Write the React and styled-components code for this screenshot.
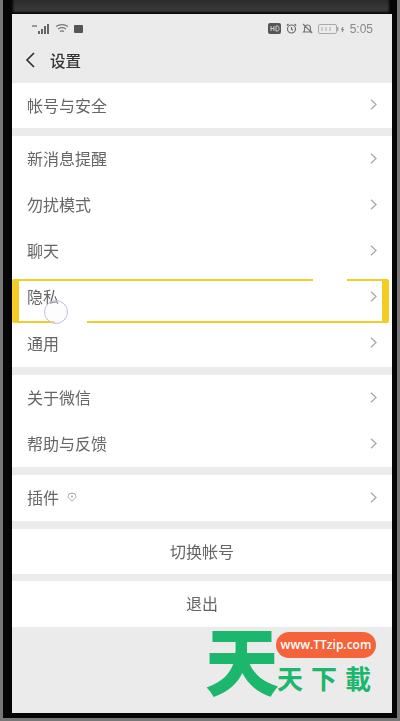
import React from 'react';
import styled, { createGlobalStyle } from 'styled-components';

const GlobalStyle = createGlobalStyle`
  html, body {
    margin: 0;
    padding: 0;
    background: #e8e8e8;
  }
`;

const Phone = styled.div`
  position: relative;
  box-sizing: border-box;
  width: 400px;
  height: 721px;
  padding: 14px 5px 5px 9px;
  border: solid #777;
  border-width: 0 3px 3px 3px;
  background: #050505;
  overflow: hidden;
  font-family: "Noto Sans CJK SC", "Liberation Sans", sans-serif;

  &::before {
    content: '';
    position: absolute;
    left: 10px;
    right: 8px;
    top: -2px;
    height: 14px;
    background: linear-gradient(#282828, #3c3c3c);
    filter: blur(1px);
  }
`;

const Screen = styled.div`
  display: flex;
  flex-direction: column;
  height: 100%;
  background: #ebebeb;
  filter: blur(0.6px);
`;

const StatusBar = styled.div`
  display: flex;
  align-items: center;
  justify-content: space-between;
  height: 29px;
  padding: 0 19px 0 20px;
  color: #666;
`;

const StatusGroup = styled.div`
  display: flex;
  align-items: center;
  gap: 5px;
`;

const Clock = styled.span`
  font-family: "Liberation Sans", sans-serif;
  font-size: 12px;
  color: #888;
`;

const NavBar = styled.div`
  display: flex;
  align-items: center;
  gap: 15px;
  height: 39px;
  padding: 0 0 6px 13px;
  box-sizing: border-box;
  font-size: 15.5px;
  font-weight: 500;
  color: #333;
`;

const Group = styled.div`
  display: flex;
  flex-direction: column;
  background: #fff;
  margin-top: ${(p) => p.$gap ?? 8}px;
`;

const Row = styled.div`
  position: relative;
  display: flex;
  align-items: center;
  justify-content: ${(p) => (p.$center ? 'center' : 'space-between')};
  box-sizing: border-box;
  height: ${(p) => p.$height ?? 46}px;
  padding: 0 15px 2px 15px;
  font-size: 16px;
  color: #666;
`;

const Label = styled.span`
  display: flex;
  align-items: center;
  gap: 8px;
`;

const Highlight = styled.div`
  position: absolute;
  left: 0;
  right: 3px;
  top: 5px;
  bottom: -3px;
  border: solid #f6cb24;
  border-width: 2px 7px 2px 7px;
  border-radius: 2px;
`;

const LineGap = styled.div`
  position: absolute;
  width: ${(p) => p.$width}px;
  height: 3px;
  background: #fff;
  left: ${(p) => p.$left}px;
  ${(p) => (p.$bottom ? 'bottom: -3px;' : 'top: 4px;')}
`;

const TouchRing = styled.div`
  position: absolute;
  left: 32px;
  top: 26px;
  width: 22px;
  height: 22px;
  border: 1px solid #c4c0da;
  border-radius: 50%;
  background: rgba(248, 248, 250, 0.35);
`;

const Watermark = styled.div`
  position: absolute;
  left: 202px;
  top: 621px;
  width: 176px;
  height: 74px;
`;

const BigGlyph = styled.span`
  position: absolute;
  left: 0;
  top: 0;
  font-size: 74px;
  line-height: 74px;
  font-weight: 900;
  color: #1cb66d;
`;

const Pill = styled.span`
  position: absolute;
  left: 71px;
  top: 11px;
  width: 100px;
  height: 26px;
  border-radius: 13px;
  background: #f4633a;
  color: #fff;
  font-family: "Open Sans", "Liberation Sans", sans-serif;
  font-size: 12px;
  font-weight: 600;
  line-height: 26px;
  text-align: center;
`;

const BrandText = styled.span`
  position: absolute;
  left: 72px;
  top: 44px;
  font-size: 26px;
  line-height: 26px;
  letter-spacing: 8px;
  font-weight: 700;
  color: #1cb66d;
  white-space: nowrap;
`;

const Chevron = () => (
  <svg width="7" height="11" viewBox="0 0 7 11" fill="none" stroke="#a9a9a9" strokeWidth="1.3">
    <path d="M1 .8l5 4.700-5 4.700" />
  </svg>
);

const BackArrow = () => (
  <svg width="10" height="16" viewBox="0 0 10 16" fill="none" stroke="#333" strokeWidth="1.7">
    <path d="M9 1L2 8l7 7" />
  </svg>
);

const SignalIcon = () => (
  <svg width="18" height="10" viewBox="0 0 18 10" fill="#666">
    <rect x="0" y="1" width="5" height="2" fill="#999" />
    <rect x="6" y="7" width="2" height="3" />
    <rect x="9" y="5" width="2" height="5" />
    <rect x="12" y="2" width="2" height="8" />
    <rect x="15" y="0" width="2" height="10" />
  </svg>
);

const WifiIcon = () => (
  <svg width="14" height="10" viewBox="0 0 14 10" fill="none" stroke="#777" strokeWidth="1.2">
    <path d="M1 2.500c3.500-2.500 8.500-2.500 12 0M3 5c2.500-1.700 5.500-1.700 8 0M5 7.500c1.300-.8 2.700-.8 4 0" />
  </svg>
);

const StopIcon = () => (
  <svg width="9" height="8" viewBox="0 0 9 8">
    <rect width="9" height="8" rx="1" fill="#555" />
  </svg>
);

const HdIcon = () => (
  <svg width="13" height="11" viewBox="0 0 13 11">
    <rect width="13" height="11" rx="2" fill="#555" />
    <path d="M3 3v5M6 3v5M3 5.500h3M8 3v5h1.500c1 0 1.500-1 1.500-2.500S10.500 3 9.500 3z" stroke="#ddd" strokeWidth="0.9" fill="none" />
  </svg>
);

const AlarmIcon = () => (
  <svg width="11" height="11" viewBox="0 0 11 11" fill="none" stroke="#666" strokeWidth="1.1">
    <circle cx="5.500" cy="6" r="4" />
    <path d="M5.500 4v2.200l1.500 1M.8 2.500L2.500 1M10.200 2.500L8.500 1" />
  </svg>
);

const MuteIcon = () => (
  <svg width="11" height="11" viewBox="0 0 11 11" fill="none" stroke="#777" strokeWidth="1.1">
    <path d="M2.500 8V5a3 3 0 0 1 6 0v3l1 1h-8zM1 1l9 9" />
  </svg>
);

const BatteryIcon = () => (
  <svg width="27" height="10" viewBox="0 0 27 10" fill="none" stroke="#aaa" strokeWidth="1">
    <rect x="0.500" y="0.500" width="18" height="9" rx="1.500" />
    <rect x="19" y="3" width="1.500" height="4" fill="#aaa" stroke="none" />
    <path d="M4 3v4M8 3v4M12 3v4" />
    <path d="M25 3l-1.500 2.500h2L24 8" stroke="#777" />
  </svg>
);

const PluginBadge = () => (
  <svg width="10" height="10" viewBox="0 0 10 10" fill="none" stroke="#aaa" strokeWidth="1">
    <path d="M1 4.500a4 3.500 0 0 1 8 0c0 1.500-2 3-4 4.500-2-1.500-4-3-4-4.500z" />
    <circle cx="5" cy="4.500" r="1" fill="#aaa" stroke="none" />
  </svg>
);

const App = () => {
  return (
    <Phone>
      <GlobalStyle />
      <Screen>
        <StatusBar>
          <StatusGroup>
            <SignalIcon />
            <WifiIcon />
            <StopIcon />
          </StatusGroup>
          <StatusGroup>
            <HdIcon />
            <AlarmIcon />
            <MuteIcon />
            <BatteryIcon />
            <Clock>5:05</Clock>
          </StatusGroup>
        </StatusBar>
        <NavBar>
          <BackArrow />
          设置
        </NavBar>
        <Group $gap={1}>
          <Row $height={45}>帐号与安全<Chevron /></Row>
        </Group>
        <Group>
          <Row>新消息提醒<Chevron /></Row>
          <Row>勿扰模式<Chevron /></Row>
          <Row>聊天<Chevron /></Row>
          <Row>
            隐私
            <Chevron />
            <Highlight />
            <LineGap $left={301} $width={34} />
            <LineGap $left={43} $width={32} $bottom />
            <TouchRing />
          </Row>
          <Row $height={47}>通用<Chevron /></Row>
        </Group>
        <Group>
          <Row>关于微信<Chevron /></Row>
          <Row>帮助与反馈<Chevron /></Row>
        </Group>
        <Group>
          <Row>
            <Label>插件<PluginBadge /></Label>
            <Chevron />
          </Row>
        </Group>
        <Group>
          <Row $center $height={45}>切换帐号</Row>
        </Group>
        <Group $gap={7}>
          <Row $center>退出</Row>
        </Group>
      </Screen>
      <Watermark>
        <BigGlyph>天</BigGlyph>
        <Pill>www.TTzip.com</Pill>
        <BrandText>天下載</BrandText>
      </Watermark>
    </Phone>
  );
};

export default App;
